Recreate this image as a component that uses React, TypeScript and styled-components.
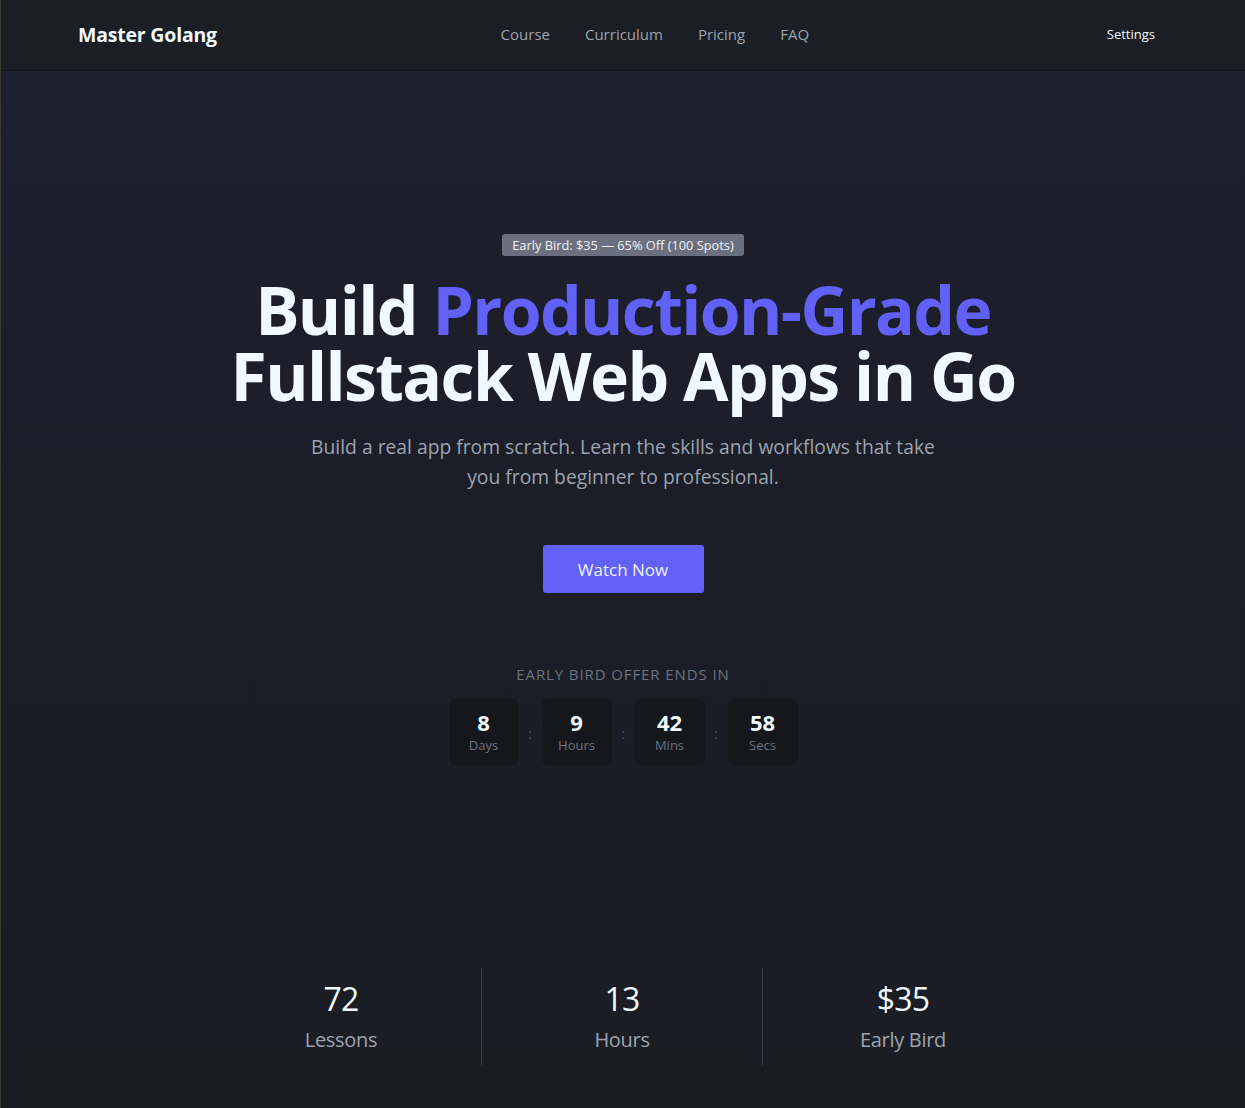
import styled, { createGlobalStyle } from "styled-components";

const GlobalStyle = createGlobalStyle`
  html, body {
    margin: 0;
    padding: 0;
    background: #1a1d24;
  }
  body {
    font-family: "Open Sans", "Noto Sans", sans-serif;
    color: #f0f9ff;
    -webkit-font-smoothing: antialiased;
  }
  * {
    box-sizing: border-box;
  }
`;

const navLinks = ["Course", "Curriculum", "Pricing", "FAQ"];

const countdown = [
  { value: "8", label: "Days" },
  { value: "9", label: "Hours" },
  { value: "42", label: "Mins" },
  { value: "58", label: "Secs" },
];

const stats = [
  { value: "72", label: "Lessons" },
  { value: "13", label: "Hours" },
  { value: "$35", label: "Early Bird" },
];

export default function App() {
  return (
    <Page>
      <GlobalStyle />
      <Header>
        <HeaderInner>
          <Logo>Master Golang</Logo>
          <Nav>
            {navLinks.map((l) => (
              <NavLink key={l}>{l}</NavLink>
            ))}
          </Nav>
          <Settings>Settings</Settings>
        </HeaderInner>
      </Header>

      <Hero>
        <Badge>Early Bird: $35 — 65% Off (100 Spots)</Badge>
        <Title>
          <TitleLine>
            Build <Accent>Production-Grade</Accent>
          </TitleLine>
          <TitleLine>Fullstack Web Apps in Go</TitleLine>
        </Title>
        <Subtitle>
          Build a real app from scratch. Learn the skills and workflows that
          take you from beginner to professional.
        </Subtitle>
        <WatchBtn>Watch Now</WatchBtn>

        <OfferLabel>Early Bird Offer Ends In</OfferLabel>
        <Countdown>
          {countdown.map((c, i) => (
            <CountItem key={c.label}>
              {i > 0 && <Colon>:</Colon>}
              <TimeBox>
                <TimeValue>{c.value}</TimeValue>
                <TimeLabel>{c.label}</TimeLabel>
              </TimeBox>
            </CountItem>
          ))}
        </Countdown>
      </Hero>

      <Stats>
        {stats.map((s, i) => (
          <Stat key={s.label} divider={i > 0}>
            <StatValue>{s.value}</StatValue>
            <StatLabel>{s.label}</StatLabel>
          </Stat>
        ))}
      </Stats>
    </Page>
  );
}

const Page = styled.div`
  min-height: 1108px;
  border-left: 1px solid #3b3834;
  background: linear-gradient(180deg, #1e2130 0%, #1b1e27 45%, #1a1d24 100%);
`;

const Header = styled.header`
  height: 71px;
  background: #1b1e25;
  border-bottom: 1px solid #15171c;
`;

const HeaderInner = styled.div`
  height: 100%;
  padding: 0 90px 0 77px;
  display: flex;
  align-items: center;
  justify-content: space-between;
`;

const Logo = styled.div`
  font-size: 19.5px;
  font-weight: 700;
  color: #f0f9ff;
  letter-spacing: -0.2px;
  margin-top: -1px;
`;

const Nav = styled.nav`
  display: flex;
  gap: 35px;
  margin-right: 14px;
  margin-top: -2px;
`;

const NavLink = styled.a`
  font-size: 15px;
  color: #9ca3af;
  cursor: pointer;
`;

const Settings = styled.div`
  font-size: 13px;
  color: #f0f9ff;
  margin-top: -2px;
`;

const Hero = styled.section`
  display: flex;
  flex-direction: column;
  align-items: center;
  padding-top: 163px;
  text-align: center;
`;

const Badge = styled.div`
  background: #6b7080;
  color: #eef0f4;
  font-size: 12.8px;
  font-weight: 500;
  line-height: 22px;
  height: 22px;
  padding: 0 10px;
  border-radius: 3px;
`;

const Title = styled.h1`
  margin: 20px 0 0;
  display: flex;
  flex-direction: column;
  align-items: center;
  font-size: 66px;
  font-weight: 700;
  letter-spacing: -1.6px;
  color: #f0f9ff;
`;

const TitleLine = styled.span`
  display: block;
  height: 66px;
  line-height: 66px;
`;

const Accent = styled.span`
  color: #6161f7;
`;

const Subtitle = styled.p`
  margin: 24px 0 0;
  max-width: 660px;
  font-size: 19.3px;
  line-height: 30px;
  color: #9ca3af;
`;

const WatchBtn = styled.button`
  margin-top: 53px;
  width: 161px;
  height: 48px;
  border: none;
  border-radius: 3px;
  background: #6161f7;
  color: #eef0ff;
  font-family: inherit;
  font-size: 17px;
  cursor: pointer;
`;

const OfferLabel = styled.div`
  margin-top: 71px;
  font-size: 15px;
  letter-spacing: 0.9px;
  text-transform: uppercase;
  color: #6b7280;
`;

const Countdown = styled.div`
  display: flex;
  margin-top: 15px;
`;

const CountItem = styled.div`
  display: flex;
  align-items: center;
`;

const Colon = styled.div`
  width: 23px;
  font-size: 15px;
  color: #4b5260;
  margin-top: 2px;
`;

const TimeBox = styled.div`
  width: 70px;
  height: 66px;
  border-radius: 6px;
  background: #15171c;
  display: flex;
  flex-direction: column;
  align-items: center;
  justify-content: center;
`;

const TimeValue = styled.div`
  font-size: 22px;
  font-weight: 700;
  line-height: 26px;
  color: #f0f9ff;
`;

const TimeLabel = styled.div`
  font-size: 13px;
  line-height: 20px;
  color: #6b7280;
`;

const Stats = styled.section`
  display: grid;
  grid-template-columns: repeat(3, 281px);
  justify-content: center;
  margin: 203px 3px 0 0;
  padding-bottom: 42px;
`;

const Stat = styled.div<{ divider: boolean }>`
  height: 97px;
  display: flex;
  flex-direction: column;
  align-items: center;
  justify-content: center;
  border-left: 1px solid ${(p) => (p.divider ? "#3a3f4a" : "transparent")};
`;

const StatValue = styled.div`
  font-size: 32px;
  line-height: 40px;
  color: #f0f9ff;
  letter-spacing: -0.8px;
`;

const StatLabel = styled.div`
  margin-top: 7px;
  font-size: 20px;
  line-height: 28px;
  color: #9ca3af;
  letter-spacing: -0.3px;
`;
